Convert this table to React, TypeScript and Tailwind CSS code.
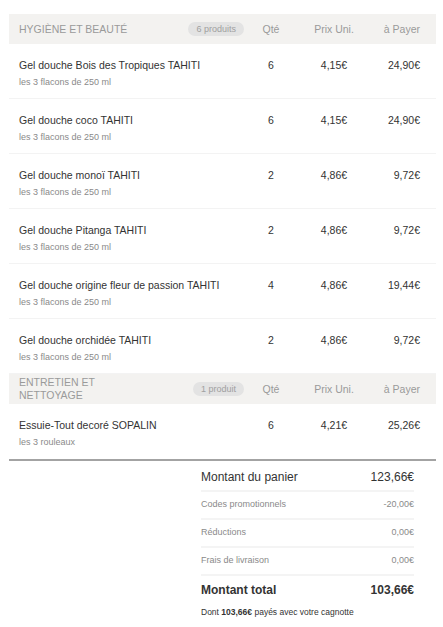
import React from "react";

type Item = { name: string; sub: string; qty: string; price: string; total: string };

const hygiene: Item[] = [
  { name: "Gel douche Bois des Tropiques TAHITI", sub: "les 3 flacons de 250 ml", qty: "6", price: "4,15€", total: "24,90€" },
  { name: "Gel douche coco TAHITI", sub: "les 3 flacons de 250 ml", qty: "6", price: "4,15€", total: "24,90€" },
  { name: "Gel douche monoï TAHITI", sub: "les 3 flacons de 250 ml", qty: "2", price: "4,86€", total: "9,72€" },
  { name: "Gel douche Pitanga TAHITI", sub: "les 3 flacons de 250 ml", qty: "2", price: "4,86€", total: "9,72€" },
  { name: "Gel douche origine fleur de passion TAHITI", sub: "les 3 flacons de 250 ml", qty: "4", price: "4,86€", total: "19,44€" },
  { name: "Gel douche orchidée TAHITI", sub: "les 3 flacons de 250 ml", qty: "2", price: "4,86€", total: "9,72€" },
];

const entretien: Item[] = [
  { name: "Essuie-Tout decoré SOPALIN", sub: "les 3 rouleaux", qty: "6", price: "4,21€", total: "25,26€" },
];

function Header({ title, badge }: { title: string; badge: string }) {
  return (
    <div className="flex items-center h-[30px] bg-[#f3f2f0] pl-[10px] pr-[16px] text-[10.5px] leading-[13px] text-[#9a9a9a]">
      <div className="w-[115px] uppercase">{title}</div>
      <div className="flex-1 flex justify-end pr-[7px]">
        <span className="rounded-full bg-[#e3e3e3] px-[8px] h-[14px] leading-[14px] text-[9px] text-[#a0a0a0]">{badge}</span>
      </div>
      <div className="w-[40px] text-center">Qté</div>
      <div className="w-[86px] text-center">Prix Uni.</div>
      <div className="w-[43px] text-right">à Payer</div>
    </div>
  );
}

function Row({ item, last }: { item: Item; last?: boolean }) {
  return (
    <div className={"flex items-start h-[55px] pt-[14px] pl-[10px] pr-[16px] " + (last ? "" : "border-b border-[#f3f3f3]")}>
      <div className="flex-1">
        <div className="text-[10.5px] leading-[14px] text-[#333]">{item.name}</div>
        <div className="mt-[4px] text-[9px] leading-[13px] text-[#8a8a8a]">{item.sub}</div>
      </div>
      <div className="w-[40px] text-center text-[10.5px] leading-[14px] text-[#333]">{item.qty}</div>
      <div className="w-[86px] text-center text-[10.5px] leading-[14px] text-[#333]">{item.price}</div>
      <div className="w-[43px] text-right text-[10.5px] leading-[14px] text-[#333]">{item.total}</div>
    </div>
  );
}

function SumRow({ label, value }: { label: string; value: string }) {
  return (
    <div className="flex items-center justify-between h-[28px] border-b-2 border-[#f4f4f4] text-[9px] text-[#8a8a8a]">
      <span>{label}</span>
      <span>{value}</span>
    </div>
  );
}

export default function App() {
  return (
    <div className="w-[443px] h-[627px] bg-white pt-[14px] pl-[9px] pr-[7px]" style={{ fontFamily: '"Liberation Sans", Arial, sans-serif' }}>
      <Header title="Hygiène et beauté" badge="6 produits" />
      {hygiene.map((it, i) => (
        <Row key={i} item={it} />
      ))}
      <Header title="Entretien et nettoyage" badge="1 produit" />
      {entretien.map((it, i) => (
        <Row key={i} item={it} last />
      ))}
      <div className="h-[2px] bg-[#a3a3a3]" />
      <div className="ml-auto mr-[22px] w-[213px] pt-[3px]">
        <div className="flex items-center justify-between h-[28px] border-b-2 border-[#f4f4f4] text-[12px] text-[#333]">
          <span>Montant du panier</span>
          <span>123,66€</span>
        </div>
        <SumRow label="Codes promotionnels" value="-20,00€" />
        <SumRow label="Réductions" value="0,00€" />
        <SumRow label="Frais de livraison" value="0,00€" />
        <div className="flex items-center justify-between h-[28px] text-[12px] font-bold text-[#333]">
          <span>Montant total</span>
          <span>103,66€</span>
        </div>
        <div className="mt-[2px] text-[8.5px] leading-[12px] text-[#333]">
          Dont <span className="font-bold">103,66€</span> payés avec votre cagnotte
        </div>
      </div>
    </div>
  );
}
